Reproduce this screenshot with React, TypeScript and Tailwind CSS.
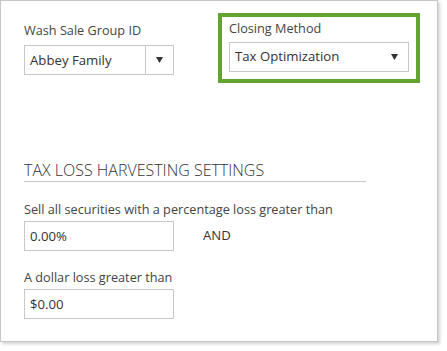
const font = { fontFamily: '"Segoe UI", "Open Sans", sans-serif' };

function Caret() {
  return (
    <svg width="7" height="6" viewBox="0 0 7 6" className="shrink-0">
      <path d="M0 0 L7 0 L3.5 6 Z" fill="#333" />
    </svg>
  );
}

export default function App() {
  return (
    <div className="w-[447px] h-[351px] bg-white" style={font}>
      <div className="w-[438px] h-[342px] border border-[#c6c6c6] bg-white shadow-[2px_2px_3px_rgba(0,0,0,0.18)] pl-[23px] pt-[12px]">
        {/* Top row */}
        <div className="flex items-start">
          <div className="w-[150px] mt-[8px]">
            <div className="h-[18px] leading-[18px] text-[12.7px] text-[#444]">Wash Sale Group ID</div>
            <div className="mt-[6px] h-[30px] flex border border-[#c8c8c8]">
              <div className="flex-1 pl-[5px] leading-[28px] text-[13.2px] text-[#333]">Abbey Family</div>
              <div className="w-[28px] border-l border-[#c8c8c8] flex items-center justify-center">
                <Caret />
              </div>
            </div>
          </div>
          <div className="ml-[44px] w-[202px] h-[70px] border-4 border-[#62a22f] pl-[7px] pt-[2px]">
            <div className="h-[18px] leading-[18px] text-[12.7px] text-[#444]">Closing Method</div>
            <div className="mt-[5px] w-[180px] h-[30px] border border-[#c8c8c8] flex items-center pl-[5px] pr-[10px]">
              <div className="flex-1 text-[13.2px] text-[#333]">Tax Optimization</div>
              <Caret />
            </div>
          </div>
        </div>

        {/* Tax loss harvesting */}
        <div className="mt-[76px] w-[342px] border-b border-[#c8c8c8] leading-[22px] text-[16px] font-light text-[#333]">
          TAX LOSS HARVESTING SETTINGS
        </div>

        <div className="mt-[18px] h-[18px] leading-[18px] text-[12.7px] text-[#444]">
          Sell all securities with a percentage loss greater than
        </div>
        <div className="mt-[3px] flex items-center">
          <div className="w-[150px] h-[30px] border border-[#c8c8c8] pl-[5px] leading-[28px] text-[13.2px] text-[#333]">0.00%</div>
          <div className="ml-[29px] text-[13.2px] text-[#333]">AND</div>
        </div>

        <div className="mt-[17px] h-[18px] leading-[18px] text-[12.7px] text-[#444]">A dollar loss greater than</div>
        <div className="mt-[3px] w-[150px] h-[30px] border border-[#c8c8c8] pl-[5px] leading-[28px] text-[13.2px] text-[#333]">$0.00</div>
      </div>
    </div>
  );
}
